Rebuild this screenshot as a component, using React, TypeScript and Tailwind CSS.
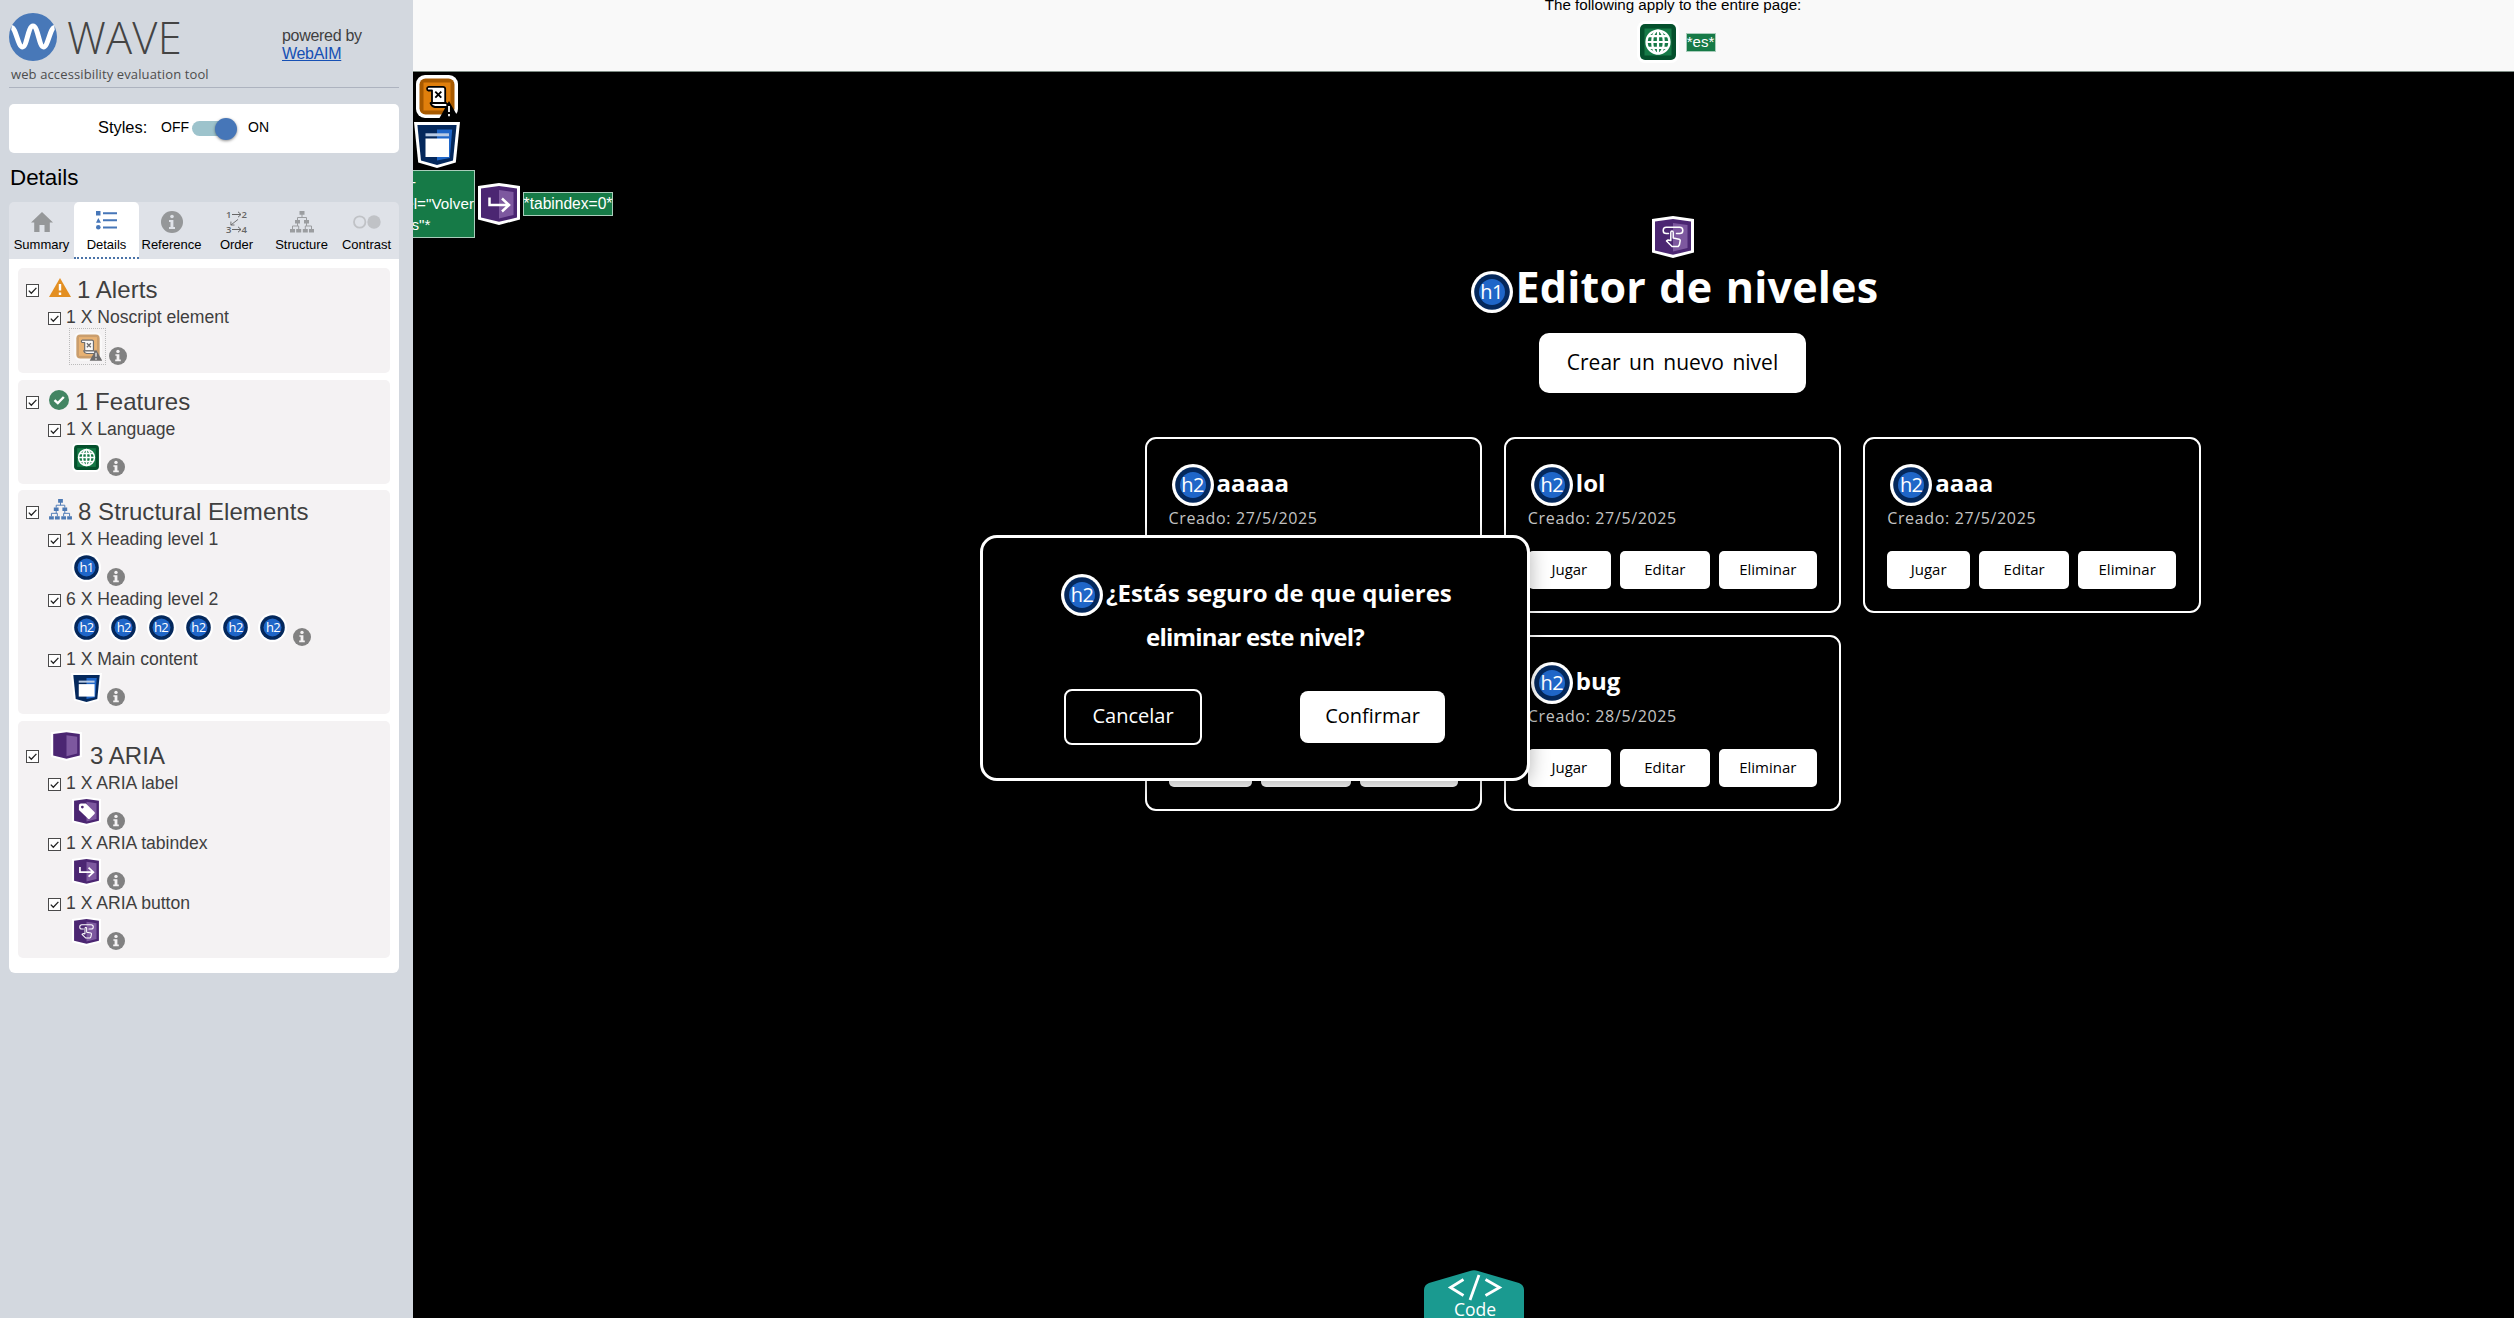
import React from "react";

const HAND = "font-['Open_Sans',sans-serif]";

function Info({ className = "" }: { className?: string }) {
  return (
    <svg viewBox="0 0 18 18" className={`size-[18px] shrink-0 ${className}`}>
      <circle cx="9" cy="9" r="9" fill="#818181" />
      <circle cx="9" cy="4.4" r="1.7" fill="#f4f2f3" />
      <path d="M6.4 7.2h4v5.4h1.4v1.6H6.2v-1.6h1.4V8.8H6.4z" fill="#f4f2f3" />
    </svg>
  );
}

function Check({ className = "" }: { className?: string }) {
  return (
    <svg viewBox="0 0 13 13" className={`size-[13px] shrink-0 ${className}`}>
      <rect x=".5" y=".5" width="12" height="12" fill="#fff" stroke="#4a4a4a" />
      <path d="M2.8 6.6 5.3 9.2 10.4 3.9" fill="none" stroke="#222" strokeWidth="1.3" />
    </svg>
  );
}

function Heading({ n, className = "" }: { n: number; className?: string }) {
  return (
    <span className={`relative inline-flex shrink-0 items-center justify-center ${className}`}>
      <svg viewBox="0 0 42 42" className="absolute inset-0 size-full">
        <circle cx="21" cy="21" r="21" fill="#fff" />
        <circle cx="21" cy="21" r="17.8" fill="#04285c" />
        <circle cx="21" cy="21" r="13" fill="#1f66c8" />
      </svg>
      <span className="relative font-['Open_Sans',sans-serif] leading-none font-normal tracking-[-0.6px] text-white">h{n}</span>
    </span>
  );
}

function Globe({ className = "" }: { className?: string }) {
  return (
    <svg viewBox="0 0 42 42" className={`shrink-0 ${className}`}>
      <rect width="42" height="42" rx="8" fill="#fff" />
      <rect x="3" y="3" width="36" height="36" rx="5" fill="#04502c" />
      <rect x="7.500" y="7.500" width="27" height="27" fill="#167a47" />
      <g fill="none" stroke="#fff" strokeWidth="2.200">
        <circle cx="21" cy="21" r="11.500" />
        <ellipse cx="21" cy="21" rx="5.800" ry="11.500" />
        <path d="M21 9.500v23M9.500 21h23M11.500 15.200h19M11.500 26.800h19" />
      </g>
    </svg>
  );
}

function Noscript({ className = "" }: { className?: string }) {
  return (
    <svg viewBox="0 0 42 43" className={`shrink-0 ${className}`}>
      <rect width="42" height="43" rx="9" fill="#fff" />
      <rect x="3.500" y="3.500" width="35" height="36" rx="6" fill="#a85a00" />
      <rect x="7.500" y="7.500" width="27" height="28" fill="#e07f0c" />
      <path d="M12.500 11.800H27a2.200 2.200 0 0 1 2.200 2.200v14H16V15.500h-3.500a1.900 1.900 0 0 1 0-3.700z" fill="#fff" stroke="#000" strokeWidth="1.800" strokeLinejoin="round" />
      <path d="M14.500 28h15.500q2.500 1.500 1.500 4H19q-3.500-.5-4.500-4z" fill="#fff" stroke="#000" strokeWidth="1.800" strokeLinejoin="round" />
      <path d="m19.300 16.700 6 6m0-6-6 6" stroke="#000" strokeWidth="1.900" />
      <path d="M33 26l9.500 17H23.500z" fill="#000" />
      <path d="M33 31v6m0 2v2.300" stroke="#fff" strokeWidth="1.800" />
    </svg>
  );
}

function MainIcon({ className = "" }: { className?: string }) {
  return (
    <svg viewBox="0 0 46 46" className={`shrink-0 ${className}`}>
      <path d="M0 0h46l-4.200 40.500L23 46 4.200 40.500z" fill="#fff" />
      <path d="M3.400 3h39.200L39 38.500 23 43 7 38.500z" fill="#04285c" />
      <path d="M23 7.500h15.200L35.800 36 23 38.500z" fill="#1f66c8" />
      <path d="M11.500 11.300h23.500v3h-23.500z" fill="#b9cbe4" />
      <path d="M11.500 16.500h23.500v18.500h-23.500z" fill="#fff" />
    </svg>
  );
}

function Aria({ kind, className = "" }: { kind?: "label" | "tab" | "button"; className?: string }) {
  return (
    <svg viewBox="0 0 42 42" className={`shrink-0 ${className}`}>
      <path d="M0 3 21 0l21 3v33.500L21 42 0 36.500z" fill="#fff" />
      <path d="M3 5.500 21 3l18 2.500v29L21 38.800 3 34.500z" fill="#4b2672" />
      <path d="M21 7l14.500 2v23L21 35.500z" fill="#7d589f" />
      {kind === "tab" && <path d="M11.500 14.500V22h19M24 15.500l7 6.500-7 6.500" fill="none" stroke="#fff" strokeWidth="2.500" />}
      {kind === "label" && (
        <>
          <path d="M10 12.500q0-3 3-3h7l12.500 12.200q1.500 1.500 0 3L26 31q-1.500 1.500-3 0L10 19z" fill="#fff" />
          <circle cx="15" cy="14.500" r="2" fill="#4b2672" />
        </>
      )}
      {kind === "button" && (
        <g fill="none" stroke="#fff" strokeWidth="1.500" strokeLinecap="round" strokeLinejoin="round">
          <path d="M16.500 17.500h-2.200a3.100 3.100 0 0 1 0-6.200h13.400a3.100 3.100 0 0 1 0 6.200H24.500" />
          <path d="M18.800 24.500v-8q0-1.500 1.200-1.500t1.200 1.500v5.500l6 1.200q1 .3 1 1.400l-.8 4.200-1.200 1.700h-6.200L14.500 25l1.600-1z" />
        </g>
      )}
    </svg>
  );
}

function Tree({ className = "" }: { className?: string }) {
  return (
    <svg viewBox="0 0 24 22" className={`shrink-0 ${className}`} fill="currentColor">
      <path d="M9.500 0h5v3.800h-5zM5 9h5v3.600H5zM14 9h5v3.600h-5zM0 18h5v3.600H0zM6.200 18h5v3.600h-5zM12.800 18h5v3.600h-5zM19 18h5v3.600h-5z" />
      <path d="M12 3v3.500M7.500 9V6.500h9V9M7.500 12v3M16.500 12v3M2.500 18v-3h6.200v3M15.300 18v-3h6.200v3" fill="none" stroke="currentColor" strokeWidth="1" />
    </svg>
  );
}

function Tab({ label, active, children }: { label: string; active?: boolean; children: React.ReactNode }) {
  return (
    <div
      className={`flex w-[65px] flex-col items-center ${
        active ? "rounded-t-[5px] border-b-2 border-dotted border-[#4a73a8] bg-white" : ""
      }`}
    >
      <div className="mt-2 flex h-6 items-center justify-center">{children}</div>
      <span className="mt-[3px] text-[13px] leading-[16px] text-black">{label}</span>
    </div>
  );
}

function Group({ className, title, icon, tall, children }: { className: string; title: string; icon: React.ReactNode; tall?: boolean; children: React.ReactNode }) {
  return (
    <section className={`rounded-[5px] bg-[#f4f2f3] ${className}`}>
      <div className={`flex items-start pl-2 ${tall ? "h-[52px] pt-[13px]" : "h-[39px]"}`}>
        <Check className="mt-4" />
        {icon}
        <h3 className="mt-[8px] text-[24px] leading-[28px] tracking-[0.05px] whitespace-nowrap text-[#3f3f3f]">{title}</h3>
      </div>
      {children}
    </section>
  );
}

function Item({ label, children }: { label: string; children: React.ReactNode }) {
  return (
    <div className="h-[60px]">
      <div className="flex h-5 pl-[30px]">
        <Check className="mt-[5px]" />
        <span className="ml-[5px] text-[17.6px] leading-5 tracking-[-0.02px] whitespace-nowrap text-[#3f3f3f]">{label}</span>
      </div>
      <div className="flex h-10 pl-[54px]">
        {children}
        <Info className="mt-[18.500px] ml-[6px]" />
      </div>
    </div>
  );
}

function Sidebar() {
  return (
    <aside className="flex h-full w-[413px] shrink-0 flex-col bg-[#d3d8df] pl-[9px] font-['Liberation_Sans',sans-serif]">
      <header className="flex h-[88px] w-[390px] border-b border-[#adb3bf]">
        <div className="w-[273px]">
          <div className="flex h-[67px] pt-[13px]">
            <svg viewBox="0 0 48 48" className="size-12">
              <circle cx="24" cy="24" r="24" fill="#4878b8" />
              <path d="M2.500 14.500C7 15 9 34 13.500 34S19 13 24 13s6 21 10.500 21S41 15 45.500 14.500" fill="none" stroke="#fff" strokeWidth="5" />
            </svg>
            <span className="-mt-[2px] ml-[10px] font-['Open_Sans',sans-serif] text-[43.500px] leading-[54px] font-light tracking-[0.200px] text-[#444]">WAVE</span>
          </div>
          <p className="-mt-[3px] ml-[2px] font-['Open_Sans',sans-serif] text-[13px] leading-5 tracking-[0.12px] whitespace-nowrap text-[#4d4d4d]">
            web accessibility evaluation tool
          </p>
        </div>
        <div className="pt-[27px] text-[16px] leading-[18px] tracking-[-0.3px] text-[#3f3f3f]">
          powered by
          <br />
          <span className="text-[#1650b4] underline">WebAIM</span>
        </div>
      </header>
      <div className="mt-4 flex h-[49px] w-[390px] items-center rounded-[5px] bg-white pb-[2px] pl-[89px] text-black">
        <span className="w-[63px] text-[16.4px]">Styles:</span>
        <span className="w-[31px] text-[14px]">OFF</span>
        <span className="mt-[2px] flex h-[15px] w-[40px] items-center justify-end rounded-full bg-[#9dc3cc]">
          <span className="-mr-[5px] size-[22px] shrink-0 rounded-full bg-[#4676b8] shadow-[0_1px_3px_rgba(0,0,0,0.45)]" />
        </span>
        <span className="ml-4 text-[14px]">ON</span>
      </div>
      <h2 className="mt-[11px] h-[38px] pl-[1px] text-[22.400px] leading-[27px] text-black">Details</h2>
      <nav className="flex h-[57px] w-[390px] rounded-t-[5px] bg-[#dfe2e8]">
        <Tab label="Summary">
          <svg viewBox="0 0 22 20" className="h-5 w-[22px]" fill="#959799">
            <path d="M11 0 22 10.500h-3.200V20h-5.300v-7h-5v7H3.200v-9.500H0z" />
          </svg>
        </Tab>
        <Tab label="Details" active>
          <svg viewBox="0 0 21 19" className="-mt-[4px] h-[19px] w-[21px]" fill="#4676b8">
            <path d="M0 0h4.500v4.500H0zM2.300 7 5 11.700H0zM7 1.200h14v2H7zM7 8.300h14v2H7zM7 15.400h14v2H7z" />
            <circle cx="2.300" cy="16.300" r="2.300" />
          </svg>
        </Tab>
        <Tab label="Reference">
          <svg viewBox="0 0 22 22" className="size-[22px]">
            <circle cx="11" cy="11" r="11" fill="#959799" />
            <circle cx="11" cy="5.500" r="1.800" fill="#dfe2e8" />
            <path d="M8 9h4.400v7H14v2H8v-2h1.500v-5H8z" fill="#dfe2e8" />
          </svg>
        </Tab>
        <Tab label="Order">
          <div className="flex h-[22px] w-[21px] flex-col justify-between font-['Open_Sans',sans-serif] text-[9.500px] leading-[7px] font-semibold text-[#666]">
            <span className="flex items-center justify-between">1<svg viewBox="0 0 10 7" className="h-[7px] w-[10px]" fill="none" stroke="#666"><path d="M0 3.500h9M6 .8l3 2.700-3 2.700" /></svg>2</span>
            <svg viewBox="0 0 10 7" className="ml-[4px] h-[7px] w-[9px]" fill="none" stroke="#666"><path d="M9 0 1 6.300M1 2.500v3.800h4" /></svg>
            <span className="flex items-center justify-between">3<svg viewBox="0 0 10 7" className="h-[7px] w-[10px]" fill="none" stroke="#666"><path d="M0 3.500h9M6 .8l3 2.700-3 2.700" /></svg>4</span>
          </div>
        </Tab>
        <Tab label="Structure">
          <Tree className="h-[22px] w-6 text-[#9b9da0]" />
        </Tab>
        <Tab label="Contrast">
          <svg viewBox="0 0 28 14" className="h-[14px] w-7">
            <circle cx="6.700" cy="7" r="5.700" fill="none" stroke="#c0c2c6" strokeWidth="1.800" />
            <circle cx="21" cy="7" r="6.700" fill="#c0c2c6" />
          </svg>
        </Tab>
      </nav>
      <div className="flex h-[714px] w-[390px] flex-col rounded-b-[6px] bg-white px-[9px] pt-[9px]">
        <Group
          className="h-[105px]"
          title="1 Alerts"
          icon={
            <svg viewBox="0 0 22 19" className="mt-[10px] mr-[6px] ml-[10px] h-[19px] w-[22px]">
              <path d="M11 0 22 19H0z" fill="#e38f22" />
              <path d="M11 6v6.500m0 2v2.500" stroke="#fff" strokeWidth="2.400" />
            </svg>
          }
        >
          <div className="h-[60px]">
            <div className="flex h-5 pl-[30px]">
              <Check className="mt-[5px]" />
              <span className="ml-[5px] text-[17.600px] leading-5 tracking-[-0.02px] whitespace-nowrap text-[#3f3f3f]">1 X Noscript element</span>
            </div>
            <div className="flex h-10 pl-[51px]">
              <span className="mt-[1px] flex size-[37px] items-center justify-center border border-dotted border-[#bbb]">
                <Noscript className="h-[29px] w-[28px] opacity-55" />
              </span>
              <Info className="mt-[20px] ml-[3px]" />
            </div>
          </div>
        </Group>
        <Group
          className="mt-[7px] h-[104px]"
          title="1 Features"
          icon={
            <svg viewBox="0 0 20 20" className="mt-[10px] mr-[6px] ml-[10px] size-5">
              <circle cx="10" cy="10" r="10" fill="#438563" />
              <path d="m5.500 10.200 3.300 3 6-6.200" fill="none" stroke="#fff" strokeWidth="2.400" />
            </svg>
          }
        >
          <Item label="1 X Language">
            <Globe className="mt-1 size-[29px]" />
          </Item>
        </Group>
        <Group className="mt-[6px] h-[224px]" title="8 Structural Elements" icon={<Tree className="mt-[9px] mr-[6px] ml-[10px] h-[21px] w-[23px] text-[#4c79b4]" />}>
          <Item label="1 X Heading level 1">
            <Heading n={1} className="mt-1 size-[29px] text-[13px]" />
          </Item>
          <Item label="6 X Heading level 2">
            <div className="flex gap-[8.300px]">
              {[0, 1, 2, 3, 4, 5].map((i) => (
                <Heading key={i} n={2} className="mt-1 size-[29px] text-[13px]" />
              ))}
            </div>
          </Item>
          <Item label="1 X Main content">
            <MainIcon className="mt-1 -mr-px -ml-px size-[31px]" />
          </Item>
        </Group>
        <Group className="mt-[7px] h-[237px]" tall title="3 ARIA" icon={<Aria className="mt-[-4px] mr-[8px] ml-[12px] size-[31px]" />}>
          <Item label="1 X ARIA label">
            <Aria kind="label" className="mt-1 size-[29px]" />
          </Item>
          <Item label="1 X ARIA tabindex">
            <Aria kind="tab" className="mt-1 size-[29px]" />
          </Item>
          <Item label="1 X ARIA button">
            <Aria kind="button" className="mt-1 size-[29px]" />
          </Item>
        </Group>
      </div>
    </aside>
  );
}

function Btn({ className, children }: { className: string; children: React.ReactNode }) {
  return <button className={`flex h-[38px] items-center justify-center rounded-[5px] bg-white pb-px text-[15px] font-medium text-black ${className}`}>{children}</button>;
}

function Card({ name, date }: { name: string; date: string }) {
  return (
    <article className={`h-[176px] rounded-[11px] border-2 border-white px-[22px] pt-[25px] ${HAND}`}>
      <div className="flex h-[42px] items-center pl-[3px]">
        <Heading n={2} className="size-[42px] text-[20px]" />
        <h2 className="ml-[3px] pb-[4px] text-[24px] leading-[38px] font-bold text-white">{name}</h2>
      </div>
      <p className="mt-[2px] text-[16px] leading-[20px] font-medium tracking-[0.650px] text-[#c4c4c4]">Creado: {date}</p>
      <div className="mt-[23px] flex gap-[9px]">
        <Btn className="w-[83px]">Jugar</Btn>
        <Btn className="w-[90px]">Editar</Btn>
        <Btn className="w-[98px]">Eliminar</Btn>
      </div>
    </article>
  );
}

export default function App() {
  return (
    <div className="relative flex h-[1318px] w-[2514px] overflow-hidden bg-black">
      <Sidebar />
      <main className="relative flex h-full w-[2101px] flex-col overflow-hidden bg-black font-['Liberation_Sans',sans-serif]">
        <header className="h-[72px] shrink-0 border-b border-[#7c8a82] bg-[#f9f9f9]">
          <div className="flex w-[2520px] flex-col items-center">
            <p className="-mt-[4px] h-[18px] text-[15.200px] leading-[18px] whitespace-nowrap text-black">The following apply to the entire page:</p>
            <div className="mt-[7px] ml-[6px] flex items-center">
              <Globe className="size-[42px]" />
              <span className="ml-[7px] flex h-[19px] w-[30px] items-center justify-center border border-[#a9cdbb] bg-[#167a47] text-[15px] text-white">*es*</span>
            </div>
          </div>
        </header>
        <div className="flex h-[261px] shrink-0">
          <div className="w-[1126px] pt-[3px]">
            <Noscript className="ml-[3px] h-[43px] w-[42px]" />
            <MainIcon className="mt-1 ml-px size-[46px]" />
            <div className="mt-[2px] flex items-center">
              <div className="flex h-[68px] w-[62px] justify-end overflow-hidden border border-l-0 border-[#a9cdbb] bg-[#167a47] text-[15.200px] leading-[21.500px] whitespace-nowrap text-white">
                <div>
                  <p className="-ml-[5px]">*aria-</p>
                  <p className="tracking-[0.05px]">label="Volver</p>
                  <p className="-ml-[13px]">niveles"*</p>
                </div>
              </div>
              <Aria kind="tab" className="ml-[3px] size-[42px]" />
              <span className="ml-[3px] flex h-6 w-[90px] items-center justify-center border border-[#a9cdbb] bg-[#167a47] text-[15.6px] text-white">*tabindex=0*</span>
            </div>
          </div>
        </div>
        <section className={`-mt-[117px] flex w-[2519px] flex-col items-center text-white ${HAND}`}>
          <Aria kind="button" className="size-[42px]" />
          <div className="mt-[2px] ml-[4px] flex h-[66px]">
            <Heading n={1} className="mt-[11px] size-[42px] text-[20px]" />
            <h1 className="ml-[3px] w-[363px] text-[43px] leading-[54px] font-bold tracking-[0.2px] whitespace-nowrap [word-spacing:2px]">Editor de niveles</h1>
          </div>
          <button className="mt-[7px] h-[60px] w-[267px] rounded-[10px] bg-white pb-px text-[21px] font-medium whitespace-nowrap text-black [word-spacing:3px]">Crear un nuevo nivel</button>
          <div className="mt-[44px] grid w-[1056px] grid-cols-3 gap-[22px]">
            <Card name="aaaaa" date="27/5/2025" />
            <Card name="lol" date="27/5/2025" />
            <Card name="aaaa" date="27/5/2025" />
            <Card name="a" date="27/5/2025" />
            <Card name="bug" date="28/5/2025" />
          </div>
        </section>
        <div
          className={`absolute top-[535px] left-[567px] flex h-[246px] w-[550px] flex-col rounded-[17px] border-[3px] border-white bg-black shadow-[0_4px_20px_rgba(0,0,0,0.3)] ${HAND}`}
        >
          <div className="mt-[33px] flex h-[87px] flex-col text-[24px] leading-[44px] font-bold whitespace-nowrap text-white">
            <div className="flex h-[44px] items-start pl-[78px]">
              <Heading n={2} className="mt-[3px] size-[42px] text-[20px]" />
              <span className="ml-[3px] [word-spacing:0.5px]">¿Estás seguro de que quieres</span>
            </div>
            <span className="text-center tracking-[-0.8px]">eliminar este nivel?</span>
          </div>
          <div className="mt-[31px] flex items-center pl-[81px] text-[20px] font-medium">
            <button className="h-[56px] w-[138px] rounded-[8px] border-2 border-white pb-[3px] text-white">Cancelar</button>
            <button className="ml-[98px] h-[52px] w-[145px] rounded-[8px] bg-white pb-[3px] text-black">Confirmar</button>
          </div>
        </div>
        <div className="absolute top-[1270px] left-[1011px] h-12 w-[100px]">
          <svg viewBox="0 0 100 48" className="absolute inset-0 h-12 w-[100px]">
            <path d="M0 20q0-5 5-7L46 1q4-1.500 8 0l41 12q5 2 5 7v28H0z" fill="#1a9a90" />
            <path d="M39.500 9.500 26.500 17.500l13 8M61.500 9.500l14 8-14 8M55 5 46 30" fill="none" stroke="#fff" strokeWidth="2.800" />
          </svg>
          <span className="relative block pt-[27px] pl-[2px] text-center font-['Open_Sans',sans-serif] text-[17.5px] leading-6 text-white">Code</span>
        </div>
      </main>
    </div>
  );
}
